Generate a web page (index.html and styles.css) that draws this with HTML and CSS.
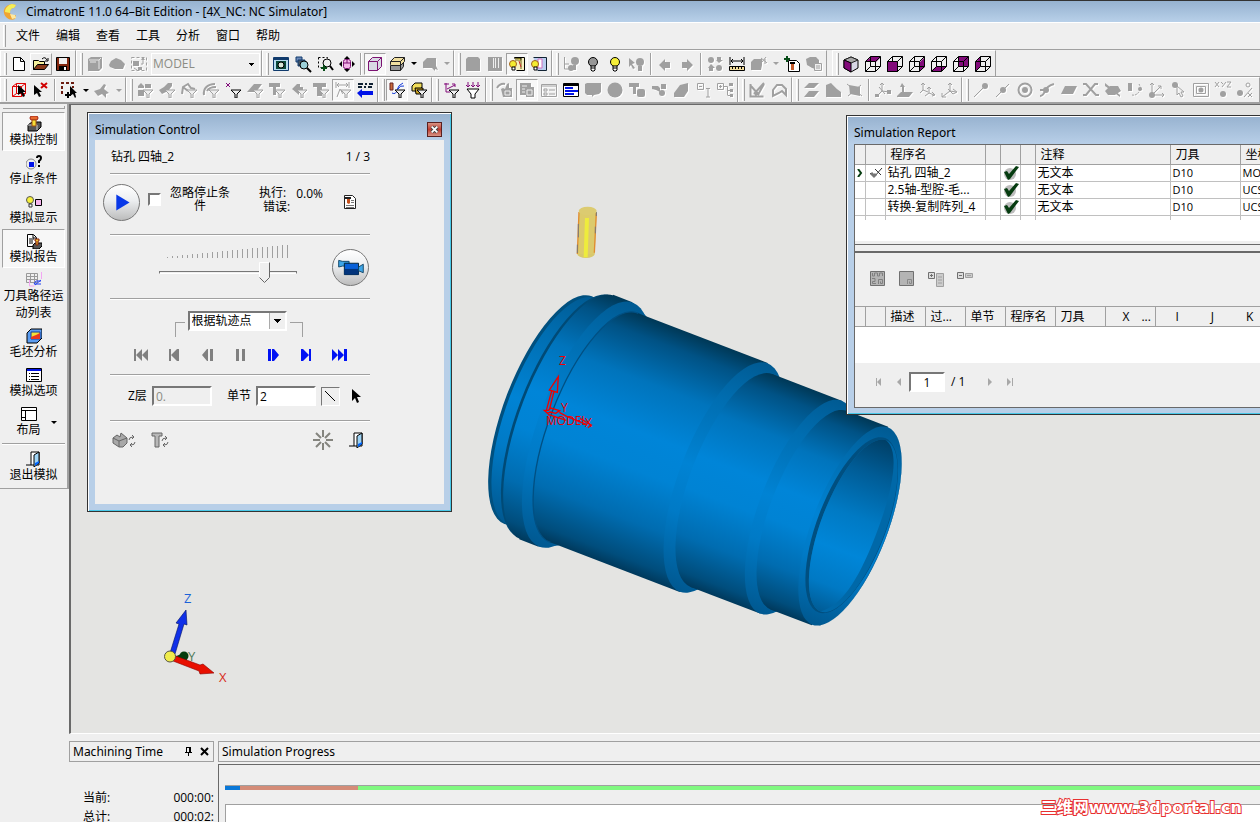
FILE: index.html
```html
<!DOCTYPE html>
<html lang="zh-CN">
<head>
<meta charset="utf-8">
<title>CimatronE 11.0 64–Bit Edition - [4X_NC: NC Simulator]</title>
<link rel="stylesheet" href="styles.css">
</head>
<body>
<svg class="sprite" aria-hidden="true">
  <symbol id="funnel" viewBox="0 0 16 16"><path d="M6 8h10l-4 4v4h-2v-4z" fill="#efefef" stroke="currentColor"/></symbol>
  <symbol id="cube" viewBox="0 0 16 16"><path d="M.5 5.500h10v10H.5zM5.500.5h10v10h-10zM.5 5.500l5-5M10.500 5.500l5-5M.5 15.500l5-5M10.500 15.500l5-5" fill="none" stroke="#000"/></symbol>
  <symbol id="check" viewBox="0 0 16 16"><circle cx="7" cy="9" r="6" fill="#bdbdbd"/><path d="M1 7l3-1 2 3 7-8 3 1-9 12-2 1z" fill="#063c10"/></symbol>
  <symbol id="bulb" viewBox="0 0 16 16"><circle cx="8" cy="6" r="4.500" stroke="#000"/><path d="M6 10h4v4l-1 1H7l-1-1z" fill="#fff" stroke="#000"/><path d="M6 12h4" stroke="#000"/></symbol>
  <symbol id="door" viewBox="0 0 16 16"><path d="M5 1h8v13H5zM0 14h5" fill="#fff" stroke="#000"/><path d="M8 4l5-3v11l-5 4z" fill="#9fd4f5" stroke="#000"/><path d="M9 12l4-2v2l-4 3z" fill="#06f"/></symbol>
  <symbol id="arrow" viewBox="0 0 16 16"><path d="M4 1v12l3-3 2 5 2-1-2-5h4z"/></symbol>
</svg>

<header class="titlebar">
  <svg class="logo" viewBox="0 0 16 16"><path d="M9 0C3 1 0 5 1 9c1 5 6 8 11 6l1-4c-3 1-6 0-6-3 0-2 1-4 4-4l2-3z" fill="#f0a432"/><path d="M9 0C5 1 2 4 2 8l5 1c0-3 1-5 4-5l2-3z" fill="#f4ee58"/><path d="M7 10l5 1 1 3-4 1z" fill="#ffe9a0"/></svg>
  <h1>CimatronE 11.0 64–Bit Edition - [4X_NC: NC Simulator]</h1>
</header>

<nav class="menubar">
  <span class="grip"></span>
  <button>文件</button><button>编辑</button><button>查看</button><button>工具</button><button>分析</button><button>窗口</button><button>帮助</button>
</nav>

<div class="toolrow">
  <div class="group"><span class="grip"></span>
    <button class="tb" aria-label="New"><svg viewBox="0 0 16 16"><path d="M2.500 1.500h7l4 4v9h-11zM9.500 1.500v4h4" fill="#fff" stroke="#000"/></svg></button>
    <button class="tb raised" aria-label="Open"><svg viewBox="0 0 16 16"><path d="M.5 13.500v-9h5l1 1h5v3" fill="#f6f19c" stroke="#000"/><path d="M.5 13.500l4-5h11l-4 5z" fill="#8a3a1a" stroke="#000"/><path d="M9 3q3-3 5 1M15 2v3h-3" fill="none" stroke="#000"/></svg></button>
    <button class="tb" aria-label="Save"><svg viewBox="0 0 16 16"><path d="M1.500 1.500h13v13h-13z" fill="#842810" stroke="#000"/><path d="M4 2h8v6H4z" fill="#efefef"/><path d="M4 10h8v4H4z"/><path d="M9 11h2v3H9z" fill="#fff"/></svg></button>
  </div>
  <div class="group"><span class="grip"></span>
    <button class="tb off" aria-label="Solid"><svg viewBox="0 0 16 16"><path d="M1 3l3-2h11v11l-3 3H1z"/><path d="M2 4h10v9M12 4l2-2M3 6h6" fill="none" stroke="#e8e8e8"/></svg></button>
    <button class="tb off" aria-label="Surface"><svg viewBox="0 0 16 16"><path d="M0 9l2-4 5-3 5 2 4 4-2 5H6L1 11z"/></svg></button>
    <button class="tb off" aria-label="Swap set"><svg viewBox="0 0 16 16"><path d="M.5 1.500h15v13H.5z" fill="none" stroke="currentColor" stroke-dasharray="3 2"/><path d="M2 5h6v5H2zM10 4h4l-2-3zM12 5v5M7 11h4v3H7z"/><path d="M12 4v4h-2M3 12l3 2" fill="none" stroke="currentColor"/></svg></button>
    <select class="combo" aria-label="Active model"><option>MODEL</option></select>
  </div>
  <div class="group"><span class="grip"></span>
    <button class="tb" aria-label="Zoom window"><svg viewBox="0 0 16 16"><path d="M.5 1.500h15v13H.5z" fill="#b7dcef" stroke="#103a6c"/><path d="M1 2h14v2H1z" fill="#103a6c"/><path d="M3 5h10v8H3z" fill="#0a4a3a"/><circle cx="8" cy="9" r="3" fill="#d8e8d8" stroke="#000"/></svg></button>
    <button class="tb" aria-label="Zoom previous"><svg viewBox="0 0 16 16"><path d="M1 1h6v5H1z" fill="#6b88b8" stroke="#103a6c"/><path d="M3 4h7v6H3z" fill="#456" stroke="#103a6c"/><circle cx="9" cy="9" r="4" fill="#9cd0d8" stroke="#000"/><path d="M12 12l4 4" stroke="#000" stroke-width="2"/></svg></button>
    <button class="tb" aria-label="Zoom in out"><svg viewBox="0 0 16 16"><path d="M1.500 1.500h9v10h-9z" fill="none" stroke="#000" stroke-dasharray="2 2"/><circle cx="10" cy="7" r="4" fill="#efefef" stroke="#000"/><path d="M13 10l3 4" stroke="#000" stroke-width="2"/><path d="M7 9v6M4 12h6" stroke="#084d18" stroke-width="2"/></svg></button>
    <button class="tb" aria-label="Pan"><svg viewBox="0 0 16 16"><path d="M8 0l3 3H5zM8 16l3-3H5zM0 8l3-3v6zM16 8l-3-3v6z"/><rect x="4.500" y="3.500" width="7" height="9" rx="2" fill="#f3b6e8" stroke="#7c1272"/><path d="M5 7h6M8 4v3" stroke="#7c1272"/></svg></button>
    <span class="sep"></span>
    <button class="tb pressed" aria-label="Shaded"><svg viewBox="0 0 16 16"><path d="M1.500 5.500l4-4h9v9l-4 4h-9z" fill="#d9d9e4" stroke="#7c1272"/><path d="M1.500 5.500h9v9M10.500 5.500l4-4" fill="none" stroke="#7c1272"/></svg></button>
    <button class="tb" aria-label="Display style"><svg viewBox="0 0 16 16"><path d="M1.500 5.500l4-4h10v4l-2 2v3l-3 4h-9v-4l1-1-1-1z" fill="#f0dfa0" stroke="#222"/><path d="M1.500 9.500h10l3-3v4l-3 4h-10z" fill="#999" stroke="#222"/><path d="M1.500 5.500h10v9M11.500 5.500l4-4" fill="none" stroke="#222"/></svg></button>
    <span class="drop"></span>
    <button class="tb off" aria-label="Select body"><svg viewBox="0 0 16 16"><path d="M1 6l4-4h9v8l2 4-3-1v2l-3-3H1z"/></svg></button>
    <span class="drop off"></span>
  </div>
  <div class="group"><span class="grip"></span>
    <button class="tb off" aria-label="Box"><svg viewBox="0 0 16 16"><path d="M1 3l2-2h10l2 2v12H1z"/></svg></button>
    <button class="tb off" aria-label="Grid"><svg viewBox="0 0 16 16"><path d="M1 1h14v14H1z"/><path d="M6.500 2v10M8.500 2v10M11.500 2v10" stroke="#efefef"/></svg></button>
    <button class="tb pressed" aria-label="Show tree"><svg viewBox="0 0 16 16"><path d="M5.500 1.500h10v13h-8" fill="#f7f0c0" stroke="#000"/><path d="M6 4h6v9" fill="none" stroke="#6a5a10"/><path d="M5 2h7v2" fill="#f1e23c" stroke="#000"/><circle cx="4" cy="8" r="3.500" fill="#f4ec30" stroke="#a06020"/><path d="M3 11h3v3H3z" fill="#fff" stroke="#000"/><path d="M10 5l2 6" stroke="#c9302c"/></svg></button>
    <button class="tb" aria-label="Show set"><svg viewBox="0 0 16 16"><path d="M2.500 1.500h13v13h-9" fill="#b9cdee" stroke="#123"/><path d="M7 3h4v9H7z" fill="#fff" stroke="#d070c0"/><circle cx="4" cy="8" r="3.500" fill="#f4ec30" stroke="#a06020"/><path d="M3 11h3v3H3z" fill="#fff" stroke="#000"/></svg></button>
  </div>
  <div class="group"><span class="grip"></span>
    <button class="tb off" aria-label="Feature tree"><svg viewBox="0 0 16 16"><path d="M1.500 1v12h4M2 8h4" fill="none" stroke="currentColor"/><circle cx="12" cy="5" r="4"/><circle cx="8" cy="12" r="3"/><path d="M10 9h3v5h-3z"/></svg></button>
    <button class="tb" aria-label="Hide"><svg viewBox="0 0 16 16"><use href="#bulb" fill="#979797"/></svg></button>
    <button class="tb" aria-label="Show"><svg viewBox="0 0 16 16"><use href="#bulb" fill="#f6f03a"/></svg></button>
    <button class="tb off" aria-label="Pick hidden"><svg viewBox="0 0 16 16"><path d="M0 2l6 5-3 1 3 4-2 1-2-4-2 2z"/><circle cx="11" cy="6" r="4"/><path d="M9 10h4v5H9z"/></svg></button>
    <span class="sep"></span>
    <button class="tb off" aria-label="Back"><svg viewBox="0 0 16 16"><path d="M2 9l6-6v3h5v6H8v3z"/></svg></button>
    <button class="tb off" aria-label="Forward"><svg viewBox="0 0 16 16"><path d="M14 9L8 3v3H3v6h5v3z"/></svg></button>
    <span class="sep"></span>
    <button class="tb off" aria-label="Replace"><svg viewBox="0 0 16 16"><circle cx="4" cy="4" r="3"/><path d="M10 1h4v3h2l-4 3-3-3h1zM2 15h4v-3h2L4 8l-3 4h1z"/><circle cx="12" cy="12" r="3"/></svg></button>
    <button class="tb" aria-label="Measure"><svg viewBox="0 0 16 16"><path d="M1 1v8M15 1v8M2 5h12M4 3L2 5l2 2M12 3l2 2-2 2" fill="none" stroke="#000"/><path d="M.5 10.500h15v4H.5z" fill="#f2dc9c" stroke="#000"/><path d="M3.500 11v2M6.500 11v2M9.500 11v2M12.500 11v2" stroke="#000"/></svg></button>
    <button class="tb off" aria-label="Explode"><svg viewBox="0 0 16 16"><path d="M0 6l3-3h8v6l-1 5H0z"/><path d="M11 6l4-5M10 2l6 5M14 3v5" stroke="currentColor"/></svg></button>
    <span class="drop off"></span>
    <button class="tb" aria-label="Tool report"><svg viewBox="0 0 16 16"><path d="M4.500 4.500h8l3 3v8h-11z" fill="#fff" stroke="#000"/><path d="M0 3h6M3 0v6" stroke="#084d18" stroke-width="2"/><path d="M6 6h5v2H6z"/><path d="M7 8h3v6H7z" fill="#c55a2a"/></svg></button>
    <button class="tb off" aria-label="List bodies"><svg viewBox="0 0 16 16"><path d="M0 3l4-2h6l3 3v5H9v4L6 12 1 9z"/><path d="M8.500 7.500h7v7h-7zM10 10h4M10 12h4" fill="#efefef" stroke="currentColor"/></svg></button>
  </div>
  <div class="group apart"><span class="grip"></span>
    <button class="tb" aria-label="Isometric view"><svg viewBox="0 0 16 16"><path d="M8 1l7 3v8l-7 4-7-4V4z" fill="#d8d8e6" stroke="#000"/><path d="M1 4l7 3 7-3-7-3z" fill="#a8a8a8" stroke="#222"/><path d="M1 4l7 3v9l-7-4z" fill="#820a7a" stroke="#000"/></svg></button>
    <button class="tb" aria-label="Top view"><svg viewBox="0 0 16 16"><path d="M0 6l6-5h10l-5 5z" fill="#820a7a"/><use href="#cube"/></svg></button>
    <button class="tb" aria-label="Front view"><svg viewBox="0 0 16 16"><use href="#cube"/><path d="M.5 5.500h10v10H.5z" fill="#820a7a" stroke="#000"/></svg></button>
    <button class="tb" aria-label="Right view"><svg viewBox="0 0 16 16"><path d="M11 6l5-5v10l-5 4z" fill="#820a7a"/><use href="#cube"/></svg></button>
    <button class="tb" aria-label="Bottom view"><svg viewBox="0 0 16 16"><path d="M0 15l6-5h10l-5 5z" fill="#820a7a"/><use href="#cube"/></svg></button>
    <button class="tb" aria-label="Back view"><svg viewBox="0 0 16 16"><path d="M5 1h10v10H5z" fill="#820a7a"/><use href="#cube"/></svg></button>
    <button class="tb" aria-label="Left view"><svg viewBox="0 0 16 16"><path d="M1 6l4-5v10l-4 4z" fill="#820a7a"/><use href="#cube"/></svg></button>
  </div>
</div>

<div class="toolrow last">
  <div class="group"><span class="grip"></span>
    <button class="tb" aria-label="Pick box"><svg viewBox="0 0 16 16"><path d="M1.500 4.500h9v10h-9zM5.500 1.500h9v10h-9zM1.500 4.500l4-3M10.500 4.500l4-3M1.500 14.500l4-3M10.500 14.500l4-3" fill="none" stroke="#e00000"/><path d="M7 3v10l3-2 2 4 2-1-2-4h3z"/></svg></button>
    <button class="tb" aria-label="Unpick"><svg viewBox="0 0 16 16"><path d="M1 3v10l3-2 2 4 2-1-2-4h3z"/><path d="M8 1l6 5M14 1L8 6" stroke="#d00000" stroke-width="2"/></svg></button>
    <span class="sep"></span>
    <button class="tb" aria-label="Select by box"><svg viewBox="0 0 16 16"><path d="M1 12V1h11v5" fill="none" stroke="#6c1c10" stroke-width="2" stroke-dasharray="3 2"/><path d="M9 4v10l3-2 2 4 1-1-1-4h2z"/><path d="M4 13h6M7 10v6" stroke="#000" stroke-width="2"/></svg></button>
    <span class="drop"></span>
    <button class="tb off" aria-label="Pick faces"><svg viewBox="0 0 16 16"><path d="M0 9l6-2 4-5 2 1-2 4 5 4-3 1v4l-4-4-4 2z"/></svg></button>
    <span class="drop off"></span>
  </div>
  <div class="group"><span class="grip"></span>
    <button class="tb off" aria-label="Filter all"><svg viewBox="0 0 16 16"><path d="M1 4l3-3 3 3v2H1zM8 2h6v4H8zM1 8h6v6H1z"/><use href="#funnel"/></svg></button>
    <button class="tb off" aria-label="Filter faces"><svg viewBox="0 0 16 16"><path d="M0 8l5-3 4-4h4v3l-4 5-6 3z"/><use href="#funnel"/></svg></button>
    <button class="tb off" aria-label="Filter edges"><svg viewBox="0 0 16 16"><path d="M1 12l1-7 5-3 3 4 4 1M2 5l5 4" fill="none" stroke="currentColor" stroke-width="2"/><use href="#funnel"/></svg></button>
    <button class="tb off" aria-label="Filter curves"><svg viewBox="0 0 16 16"><path d="M1 13C0 7 4 2 12 2M4 9q2-4 9-4" fill="none" stroke="currentColor" stroke-width="2"/><use href="#funnel"/></svg></button>
    <button class="tb" aria-label="Filter points"><svg viewBox="0 0 16 16"><path d="M1 1l4 4M5 1L1 5" stroke="#820a7a"/><use href="#funnel"/></svg></button>
    <button class="tb off" aria-label="Filter planes"><svg viewBox="0 0 16 16"><path d="M0 10l7-8h8l-6 8z"/><use href="#funnel"/></svg></button>
    <button class="tb off" aria-label="Filter tools"><svg viewBox="0 0 16 16"><path d="M0 1h11v4H7v8H4V5H0z"/><use href="#funnel"/></svg></button>
    <button class="tb off" aria-label="Filter arrows"><svg viewBox="0 0 16 16"><path d="M1 7l5-5h3v3h3v4H8v4z"/><use href="#funnel"/></svg></button>
    <button class="tb off" aria-label="Filter text"><svg viewBox="0 0 16 16"><path d="M0 1h13v4H9v9H4V5H0z"/><use href="#funnel"/></svg></button>
    <button class="tb off pressed" aria-label="Filter dimensions"><svg viewBox="0 0 16 16"><path d="M1 0v6M14 0v6M2 3h11M4 1L2 3l2 2M11 1l2 2-2 2M2 15l3-8 3 5" fill="none" stroke="currentColor"/><use href="#funnel"/></svg></button>
    <button class="tb" aria-label="Invert filter"><svg viewBox="0 0 16 16"><path d="M1 2h5M8 2h2M12 2h4M1 5h4M7 5h2M11 5h4" stroke="#123" stroke-width="2"/><path d="M0 11l5-4v2h11v4H5v3z" fill="#0012e8"/></svg></button>
  </div>
  <div class="group"><span class="grip"></span>
    <button class="tb pressed" aria-label="Motion filter"><svg viewBox="0 0 16 16"><path d="M1 1h3v7H1z" fill="#c96a38" stroke="#622"/><path d="M3 11q4 2 5-3T14 1M9 7q2-4 6-3" fill="none" stroke="#1238d8"/><use href="#funnel"/></svg></button>
    <button class="tb" aria-label="Part filter"><svg viewBox="0 0 16 16"><path d="M1 4l3-3h7v4l-3 4H1z" fill="#f0dc58" stroke="#000"/><path d="M4 6h8v6H5z" fill="#c8a020" stroke="#000"/><use href="#funnel"/></svg></button>
  </div>
  <div class="group"><span class="grip"></span>
    <button class="tb" aria-label="Path filter"><svg viewBox="0 0 16 16"><path d="M1 2h5M3 1v9h4M4 7l8-4M9 2h3v3" fill="none" stroke="#820a7a"/><use href="#funnel"/></svg></button>
    <button class="tb" aria-label="Axis filter"><svg viewBox="0 0 16 16"><path d="M3 0v4M8 0v4M13 0v4M1 3l2 2 2-2M6 3l2 2 2-2M11 3l2 2 2-2" fill="none" stroke="#820a7a"/><path d="M2 7h12l-4 5v4H6v-4z" fill="#fff" stroke="#000"/></svg></button>
  </div>
  <div class="group"><span class="grip"></span>
    <button class="tb off" aria-label="Simulate"><svg viewBox="0 0 16 16"><path d="M0 6q3-5 8-4" fill="none" stroke="currentColor" stroke-width="2"/><path d="M4 7l2-1 2 1 2-5 2-1v5h3v9H6z"/><path d="M8 9h5v4H8z" fill="none" stroke="#efefef"/></svg></button>
    <button class="tb off pressed" aria-label="Simulator"><svg viewBox="0 0 16 16"><path d="M1 1h11v4h3v10H7v-2H1z"/><path d="M3 4h5M3 7h3M3 10h3M8 8h5v5H8z" fill="none" stroke="#efefef"/></svg></button>
    <button class="tb off" aria-label="Form"><svg viewBox="0 0 16 16"><path d="M.5 2.500h15v12H.5zM1 4h14M3 7h3v2H3zM3 11h3v2H3zM8 8h6M8 12h6" fill="none" stroke="currentColor"/></svg></button>
    <button class="tb" aria-label="Procedure list"><svg viewBox="0 0 16 16"><path d="M.5 1.500h15v13H.5z" fill="#fff" stroke="#000"/><path d="M1 2h14v2H1z"/><path d="M2 6h8M2 9h13M2 12h9" stroke="#0012e8" stroke-width="2"/></svg></button>
    <button class="tb off" aria-label="Block"><svg viewBox="0 0 16 16"><path d="M0 2l2-1h14v9l-2 2-5 1-2 2v-2H2l-2-2z"/></svg></button>
    <button class="tb off" aria-label="Sphere"><svg viewBox="0 0 16 16"><circle cx="8" cy="8" r="7.500"/></svg></button>
    <button class="tb off" aria-label="Bolt"><svg viewBox="0 0 16 16"><path d="M0 1h10v4H7v7H4V5H0z"/><rect x="8" y="7" width="8" height="8" rx="2"/></svg></button>
    <button class="tb off" aria-label="Transform"><svg viewBox="0 0 16 16"><path d="M1 4h6l2 2v4L5 8 1 7zM10 2h5v5h-5z"/><circle cx="11" cy="11" r="3"/></svg></button>
    <button class="tb off" aria-label="Wedge"><svg viewBox="0 0 16 16"><path d="M1 11l6-8 8-2v8l-4 6H1z"/></svg></button>
    <button class="tb off" aria-label="Collapse"><svg viewBox="0 0 16 16"><path d="M2.500 1.500h6v6h-6zM4 4.500h3M11 6.500h4M13 7v8M11 15h4" fill="none" stroke="currentColor"/></svg></button>
    <button class="tb off" aria-label="Expand"><svg viewBox="0 0 16 16"><path d="M.5 1.500h6v6h-6zM2 4.500h3M3.500 3v3M7 4.500h3.500v9M11 8.500h2M11 13.500h2" fill="none" stroke="currentColor"/><path d="M12 1h4v3h-4zM13 7h3v3h-3zM13 12h3v3h-3z"/></svg></button>
  </div>
  <div class="group"><span class="grip"></span>
    <button class="tb off" aria-label="Sketch"><svg viewBox="0 0 16 16"><path d="M1.500 2v12.500h13M2 4l8 9M5 12L15 1M6 13l4-2 5-9" fill="none" stroke="currentColor" stroke-width="2"/></svg></button>
    <button class="tb off" aria-label="Composite"><svg viewBox="0 0 16 16"><path d="M2 14V8l4-5h5l4 4v6l-4-4-3 2z" fill="none" stroke="currentColor" stroke-width="2"/></svg></button>
  </div>
  <div class="group"><span class="grip"></span>
    <button class="tb off" aria-label="Planes"><svg viewBox="0 0 16 16"><path d="M1 6l5-5h10l-5 5zM1 15l5-6h10l-5 6z"/></svg></button>
    <button class="tb off" aria-label="Plane"><svg viewBox="0 0 16 16"><path d="M1 15V3l5-2 6 6 4 3v5z"/></svg></button>
    <button class="tb off" aria-label="Main planes"><svg viewBox="0 0 16 16"><path d="M2 3l11 2v9L3 12z"/><path d="M0 2l15 12M1 14L14 3" stroke="currentColor"/></svg></button>
    <span class="sep"></span>
    <button class="tb off" aria-label="UCS"><svg viewBox="0 0 16 16"><path d="M7 1v8M7 9l7 1M7 9l-5 5M5 3l2-2 2 2M4 5l6 7" fill="none" stroke="currentColor"/><path d="M0 12h4v3H0zM12 8h4v4h-4z"/></svg></button>
    <button class="tb off" aria-label="UCS on face"><svg viewBox="0 0 16 16"><path d="M0 14l4-4h12l-4 5H0zM5 1l3 4H7v6H5V5H3z"/></svg></button>
    <button class="tb off" aria-label="Move UCS"><svg viewBox="0 0 16 16"><path d="M4 1v7l5 2M4 8L1 11M2 3l2-2 2 2M10 5v6l5 2M10 11l-4 3M8 7l2-2 2 2M13 10l3 3-3 1" fill="none" stroke="currentColor"/></svg></button>
    <button class="tb off" aria-label="Activate UCS"><svg viewBox="0 0 16 16"><path d="M9 1v8l6 1M9 9l-8 6M7 3l2-2 2 2M1 11v4h4M12 7l4 3-4 2M7 7l5 5" fill="none" stroke="currentColor"/></svg></button>
  </div>
  <div class="group open"><span class="grip"></span>
    <button class="tb off" aria-label="End point"><svg viewBox="0 0 16 16"><path d="M1 15L12 4" stroke="currentColor"/><circle cx="12" cy="4" r="3"/></svg></button>
    <button class="tb off" aria-label="Mid point"><svg viewBox="0 0 16 16"><path d="M1 15L14 2" stroke="currentColor"/><circle cx="8" cy="8" r="3"/></svg></button>
    <button class="tb off" aria-label="Center"><svg viewBox="0 0 16 16"><circle cx="8" cy="8" r="6.500" fill="none" stroke="currentColor" stroke-width="2"/><circle cx="8" cy="8" r="3"/></svg></button>
    <button class="tb off" aria-label="On curve"><svg viewBox="0 0 16 16"><path d="M1 14q3 0 5-5t9-7M1 8h6" fill="none" stroke="currentColor" stroke-width="2"/><circle cx="7" cy="8" r="3"/></svg></button>
    <button class="tb off" aria-label="On face"><svg viewBox="0 0 16 16"><path d="M0 12l4-8h12l-4 8z"/></svg></button>
    <button class="tb off" aria-label="Intersection"><svg viewBox="0 0 16 16"><path d="M0 2h3l10 11h3M15 2h-3L3 13H0" fill="none" stroke="currentColor" stroke-width="2"/></svg></button>
    <button class="tb off" aria-label="Pierce"><svg viewBox="0 0 16 16"><path d="M0 9l5-5h8l3 5-6 4H3zM0 1l15 12v2L0 4z"/></svg></button>
    <button class="tb off" aria-label="Quadrant"><svg viewBox="0 0 16 16"><path d="M1 1h4v8H1z"/><path d="M5 13q5 1 8-5M12 2l3 6" fill="none" stroke="currentColor" stroke-dasharray="2 1"/><circle cx="13" cy="7" r="2"/></svg></button>
    <button class="tb off" aria-label="Origin"><svg viewBox="0 0 16 16"><path d="M3 1v12h12M3 13L12 4M1 3l2-2 2 2M13 11l2 2-2 2M9 4h3v3" fill="none" stroke="currentColor"/><circle cx="3" cy="13" r="3"/></svg></button>
    <button class="tb off" aria-label="Pick point"><svg viewBox="0 0 16 16"><circle cx="4" cy="3" r="3"/><path d="M6 4v9l2-2 2 4 2-1-2-4h3z" fill="none" stroke="currentColor"/></svg></button>
    <button class="tb off" aria-label="Screen"><svg viewBox="0 0 16 16"><path d="M.5 1.500h15v13H.5zM3.500 4.500h9v7h-9z" fill="none" stroke="currentColor"/><circle cx="8" cy="8" r="2.500"/></svg></button>
    <button class="tb off" aria-label="By coordinates"><svg viewBox="0 0 16 16"><path d="M0 0l4 5M4 0L0 5M6 0l2 2M11 0L7 5M12 0h4l-4 5h4" fill="none" stroke="currentColor"/><circle cx="8" cy="12" r="3"/></svg></button>
    <button class="tb off" aria-label="Delta"><svg viewBox="0 0 16 16"><circle cx="3" cy="11" r="3"/><circle cx="11" cy="3" r="2" fill="none" stroke="currentColor"/><path d="M7 15l8-9M11 11l4 4M15 11l-4 4" stroke="currentColor"/></svg></button>
  </div>
</div>

<div class="main">
  <aside class="sidebar">
    <div class="sidegroup">
      <span class="hgrip"></span>
      <button class="side on"><svg viewBox="0 0 16 16"><path d="M2 9l4-3h9v5l-4 4H2z" fill="#555" stroke="#000"/><path d="M2 9h9v5" fill="none" stroke="#ccc"/><rect x="4" y="0" width="8" height="4" rx="2" fill="#e86a30" stroke="#a02010"/><path d="M6 4h4v6H6z" fill="#f5df38" stroke="#a05010"/></svg><span>模拟控制</span></button>
      <button class="side"><svg viewBox="0 0 16 16"><circle cx="5" cy="9" r="5" fill="#eee" stroke="#888"/><path d="M3 7h5v5H3z" fill="#0012e8"/><path d="M11 3q0-2 2-2t2 2-2 3v2M13 10v2" fill="none" stroke="#000" stroke-width="2"/></svg><span>停止条件</span></button>
      <button class="side"><svg viewBox="0 0 16 16"><circle cx="4" cy="6" r="3.500" fill="#f6f03a" stroke="#555"/><path d="M3 10h3v3H3z" fill="#fff" stroke="#333"/><path d="M9.500 5.500h6v6h-6z" fill="#f5b4ee" stroke="#000"/></svg><span>模拟显示</span></button>
      <button class="side on"><svg viewBox="0 0 16 16"><path d="M1.500 1.500h6l3 3v9h-9zM7 2v3h3M3 6h5M3 8h4M3 10h4" fill="#fff" stroke="#000"/><path d="M7 12l2-2h7v3l-3 3H7z" fill="#555" stroke="#000"/><path d="M9 6h4v2h-1v4h-2V8H9z" fill="#f0c030" stroke="#802010"/></svg><span>模拟报告</span></button>
      <button class="side"><svg viewBox="0 0 16 16"><path d="M.5 1.500h11v9H.5zM0 4.500h11M4.500 1v9M8.500 1v9M0 7.500h11" fill="none" stroke="#999"/><path d="M3.500 8v6h5M15.500 0v7" fill="none" stroke="#f3a6f3"/><path d="M15 9h-5l-2 3h7M15 8l-6 5" fill="none" stroke="#2040f0"/></svg><span>刀具路径运动列表</span></button>
      <button class="side"><svg viewBox="0 0 16 16"><path d="M1 5l4-4h11v9l-5 5H1z" fill="#5a9cf0" stroke="#000"/><path d="M5 4h9v7H5z" fill="#f4e038" stroke="#103a9c"/><path d="M5 9l5-2 4-2v6H5z" fill="#e83820"/></svg><span>毛坯分析</span></button>
      <button class="side"><svg viewBox="0 0 16 16"><path d="M.5 1.500h15v13H.5z" fill="#fff" stroke="#000"/><path d="M1 2h14v2H1z" fill="#0012e8"/><path d="M3 6.500h1M3 9.500h1M3 12.500h1M5 6.500h8M5 9.500h8M5 12.500h8" stroke="#000"/></svg><span>模拟选项</span></button>
      <button class="side layout"><svg viewBox="0 0 16 16"><path d="M.5 1.500h15v13H.5zM1 4.500h14M4.500 5v9M5 11.500h-4" fill="#fff" stroke="#000"/></svg><span>布局</span><i class="caret"></i></button>
      <span class="hsep"></span>
      <button class="side"><svg viewBox="0 0 16 16"><use href="#door"/></svg><span>退出模拟</span></button>
    </div>
  </aside>

  <div class="workspace">
    <main class="viewport">
      <svg class="scene" viewBox="71 105 860 628" role="img" aria-label="Blue stepped cylinder part with cutting tool">
        <defs>
          <linearGradient id="body" x1="0" y1="0" x2="0" y2="1"><stop offset="0" stop-color="#003856"/><stop offset=".08" stop-color="#005285"/><stop offset=".25" stop-color="#0074bc"/><stop offset=".45" stop-color="#0085d8"/><stop offset=".6" stop-color="#0083d4"/><stop offset=".8" stop-color="#006cb0"/><stop offset=".95" stop-color="#004d7c"/><stop offset="1" stop-color="#00395c"/></linearGradient>
          <linearGradient id="rim" x1="0" y1="0" x2="0" y2="1"><stop offset="0" stop-color="#005a92"/><stop offset=".2" stop-color="#006db0"/><stop offset=".5" stop-color="#0083d4"/><stop offset=".7" stop-color="#007ac6"/><stop offset="1" stop-color="#005890"/></linearGradient>
          <linearGradient id="hole" x1="0" y1="0" x2="0" y2="1"><stop offset="0" stop-color="#003f66"/><stop offset=".2" stop-color="#005c96"/><stop offset=".45" stop-color="#007ac4"/><stop offset=".65" stop-color="#0086d8"/><stop offset=".85" stop-color="#0079c4"/><stop offset="1" stop-color="#005c96"/></linearGradient>
        </defs>
        <g transform="translate(480 200) scale(.33333)">
          <g transform="translate(1110 978) rotate(21)">
            <ellipse cx="-970" cy="0" rx="132" ry="366" fill="#00507f"/>
            <ellipse cx="-960" cy="0" rx="132" ry="364" fill="url(#rim)"/>
            <path d="M-960-365h45v730h-45z" fill="url(#body)"/>
            <ellipse cx="-918" cy="0" rx="139" ry="388" fill="#004a76"/>
            <ellipse cx="-910" cy="0" rx="139" ry="391" fill="url(#body)"/>
            <path d="M-912-393h62v786h-62z" fill="url(#body)"/>
            <ellipse cx="-848" cy="0" rx="141" ry="392" fill="url(#rim)"/>
            <path d="M-848-392L-795-368V368L-848 392z" fill="url(#rim)"/>
            <ellipse cx="-825" cy="0" rx="132" ry="368" fill="url(#body)" stroke="#005083" stroke-width="4"/>
            <path d="M-822-368h416v736h-416z" fill="url(#body)"/>
            <ellipse cx="-406" cy="0" rx="132" ry="367" fill="url(#rim)"/>
            <path d="M-406-367l46 25v684l-46 25z" fill="url(#rim)"/>
            <ellipse cx="-381" cy="0" rx="123" ry="342" fill="url(#body)"/>
            <path d="M-381-342h223v684h-223z" fill="url(#body)"/>
            <ellipse cx="-158" cy="0" rx="123" ry="342" fill="url(#rim)"/>
            <path d="M-158-342l44 23v638l-44 23z" fill="url(#rim)"/>
            <ellipse cx="-133" cy="0" rx="114" ry="319" fill="url(#body)"/>
            <path d="M-133-319H0v638h-133z" fill="url(#body)"/>
            <ellipse cx="0" cy="0" rx="113" ry="317" fill="url(#rim)"/>
            <path d="M0-317A113 317 0 0 1 0 317A106 300 0 0 0 0-317" fill="#00568a"/>
            <ellipse cx="4" cy="-4" rx="103" ry="280" fill="#004f80"/>
            <ellipse cx="9" cy="-4" rx="96" ry="275" fill="#0068a8"/>
            <path d="M-87-4A96 275 0 0 1 9-279C60-262 82-150 82 0S60 235 9 271A96 275 0 0 1-87-4" fill="url(#hole)"/>
          </g>
          <g>
            <ellipse cx="318" cy="162" rx="26" ry="12" fill="#d8c86c"/>
            <path d="M297 36l-5 126h52l6-126z" fill="#dcca6c"/>
            <path d="M297 36l-5 126M349 38l-6 120" stroke="#e08c30" stroke-width="4"/><path d="M295 72v40M292 134v25M349 36v12M346 80v20" stroke="#777" stroke-width="3"/>
            <path d="M315 54h12l-4 118h-12z" fill="#eeec3c"/><ellipse cx="323" cy="33" rx="27" ry="13" fill="#dccb70"/>
          </g>
          <g fill="none" stroke="#f00000" stroke-width="4">
            <path d="M235 530l-27 40 24 7zM215 573l-16 58M222 574l-14 56M193 631h12l8-7 26 8-12 8-16-4-8 4zM238 637l22 12 60 25M204 643l55 18M300 655l34 20-10 8"/>
          </g>
        </g>
        <g class="ucs"><text x="559" y="365">Z</text><text x="561" y="412">Y</text><text x="546" y="425">MODEL</text><text x="585" y="427">X</text></g>
        <g>
          <path d="M170 653l9-29-3-1 10-13 1 15-3-1-9 30z" fill="#1030e8" stroke="#001060" stroke-width=".6"/>
          <path d="M174 657l12-5v8z" fill="#043c0c"/><circle cx="184" cy="656" r="4.500" fill="#043c0c"/>
          <path d="M173 655l27 10 3-1 11 9-14 1-1-3-26-10z" fill="#e81000" stroke="#800" stroke-width=".6"/>
          <circle cx="170" cy="656.500" r="5.500" fill="#f0ec4c" stroke="#554" stroke-width="1"/>
          <g class="axis"><text x="184" y="603" fill="#1c62d8">Z</text><text x="188" y="661" fill="#4f7a58">Y</text><text x="219" y="682" fill="#d82c20">X</text></g>
        </g>
      </svg>

      <section class="window control">
        <div class="wintitle"><h2>Simulation Control</h2><button class="close" aria-label="Close"><svg viewBox="0 0 14 14"><path d="M4 4l6 6M10 4l-6 6" stroke="#444" stroke-width="4"/><path d="M4 4l6 6M10 4l-6 6" stroke="#fff" stroke-width="2"/></svg></button></div>
        <div class="panel">
          <div class="row head"><span>钻孔 四轴_2</span><span>1 / 3</span></div>
          <hr>
          <div class="row run">
            <button class="round" aria-label="Play"><svg viewBox="0 0 37 37"><path d="M13 10l14 8.500L13 27z" fill="#0838e8"/></svg></button>
            <label class="ignore"><input type="checkbox"><span>忽略停止条件</span></label>
            <div class="stats"><div>执行:</div><div>错误:</div></div>
            <span class="pct">0.0%</span>
            <button class="plain report" aria-label="Report"><svg viewBox="0 0 16 16"><path d="M2.500 1.500h8l3 3v10h-11z" fill="#fff" stroke="#222"/><path d="M3 3h6v2H3z" fill="#222"/><path d="M5 5h3v4l-1 1-2-1z" fill="#c5501c"/><path d="M9 6.500h3M9 8.500h3M4 11.500h8M4 13.500h8" stroke="#777"/></svg></button>
          </div>
          <hr>
          <div class="row speed">
            <div class="slider">
              <svg class="ticks" viewBox="0 0 124 14"><path d="M1.500 14v-1M6.500 14v-2M11.500 14v-2M16.500 14v-3M21.500 14v-3M26.500 14v-4M31.500 14v-4M36.500 14v-5M41.500 14v-5M46.500 14v-6M51.500 14v-6M56.500 14v-7M61.500 14v-7M66.500 14v-8M71.500 14v-8M76.500 14v-9M81.500 14v-9M86.500 14v-10M91.500 14v-10M96.500 14v-11M101.500 14v-11M106.500 14v-12M111.500 14v-12M116.500 14v-13M121.500 14v-13" stroke="#a0a0a0"/></svg>
              <input type="range" min="0" max="100" value="79" aria-label="Simulation speed">
            </div>
            <button class="round" aria-label="Record"><svg viewBox="0 0 37 37"><path d="M6 11l4 1h7v5h-7l-4 1z" fill="#3ea6e8" stroke="#146"/><path d="M12 14h15v12H12z" fill="#0860d8" stroke="#023"/><path d="M12 20h15v6H12z" fill="#02347c"/><path d="M27 18l5-3v9l-5-2z" fill="#3ea6e8" stroke="#146"/></svg></button>
          </div>
          <hr>
          <div class="mode"><i class="brk left"></i><select aria-label="Step mode"><option>根据轨迹点</option></select><i class="brk right"></i></div>
          <div class="transport">
            <button class="plain" aria-label="First"><svg viewBox="0 0 15 12"><path d="M0 0h2v12H0zM8 0v12L2 6zM14 0v12L8 6z"/></svg></button>
            <button class="plain" aria-label="Previous step"><svg viewBox="0 0 15 12"><path d="M2 0h2v12H2zM12 0v12H10L4 6l6-6z"/></svg></button>
            <button class="plain" aria-label="Step back"><svg viewBox="0 0 15 12"><path d="M8 0v12H7L2 6l5-6zM10 0h3v12h-3z"/></svg></button>
            <button class="plain" aria-label="Pause"><svg viewBox="0 0 15 12"><path d="M3 0h3v12H3zM9 0h3v12H9z"/></svg></button>
            <button class="plain live" aria-label="Step"><svg viewBox="0 0 15 12"><path d="M2 0h3v12H2zM6 0h2l5 6-5 6H6z"/></svg></button>
            <button class="plain live" aria-label="Next step"><svg viewBox="0 0 15 12"><path d="M2 0h2l6 6-6 6H2zM10 0h2v12h-2z"/></svg></button>
            <button class="plain live" aria-label="Last"><svg viewBox="0 0 15 12"><path d="M0 0l6 6-6 6zM6 0l6 6-6 6zM12 0h3v12h-3z"/></svg></button>
          </div>
          <hr>
          <div class="row fields">
            <label for="zl">Z层</label><input id="zl" class="box" type="text" value="0." disabled>
            <label for="blk" class="blk">单节</label><input id="blk" class="box" type="text" value="2">
            <button class="linebtn" aria-label="Line"><svg viewBox="0 0 16 16"><path d="M3 3l10 10" stroke="#000"/></svg></button>
            <button class="plain pick" aria-label="Pick"><svg viewBox="0 0 16 16"><use href="#arrow"/></svg></button>
          </div>
          <hr>
          <div class="row foot">
            <button class="plain wide" aria-label="Update part"><svg viewBox="0 0 24 16"><path d="M1 6l4-3 3 2 1-4 6 5v5l-4 4H7L1 11z" fill="#a8a8a8" stroke="#666"/><path d="M1 6l6 3v6M7 9l8-3" fill="none" stroke="#666"/><path d="M17 8q0-3 4-3M20 3l2 2-2 2M23 10q0 3-4 3M20 11l-2 2 2 2" fill="none" stroke="#666"/></svg></button>
            <button class="plain mid" aria-label="Update tool"><svg viewBox="0 0 18 16"><path d="M1 1h10v3H8v11H4V4H1z" fill="#b8b8b8" stroke="#666"/><path d="M11 9q0-3 4-3M14 4l2 2-2 2M17 10q0 3-4 3M14 11l-2 2 2 2" fill="none" stroke="#666"/></svg></button>
            <button class="plain star" aria-label="Reset"><svg viewBox="0 0 20 20"><path d="M10 0v7M10 13v7M0 10h7M13 10h7M3 3l5 5M12 12l5 5M17 3l-5 5M8 12l-5 5" stroke="#85857f" stroke-width="2"/></svg></button>
            <button class="plain exit" aria-label="Exit"><svg viewBox="0 0 16 16"><use href="#door"/></svg></button>
          </div>
        </div>
      </section>

      <section class="window reportwin">
        <div class="wintitle"><h2>Simulation Report</h2></div>
        <div class="sheet">
          <div class="upper">
            <table class="grid">
              <colgroup><col class="w10"><col class="w20"><col class="w100"><col class="w15"><col class="w20"><col class="w15"><col class="w135"><col class="w70"><col class="w70"></colgroup>
              <thead><tr><th></th><th></th><th>程序名</th><th></th><th></th><th></th><th>注释</th><th>刀具</th><th>坐标系</th></tr></thead>
              <tbody>
                <tr><td><svg class="mark" viewBox="0 0 6 8"><path d="M1 0l3 4-3 4" fill="none" stroke="#063c10" stroke-width="2"/></svg></td><td><svg class="tick" viewBox="0 0 14 12"><path d="M1 6l4 4 8-9M6 2l6 6" fill="none" stroke="#333" stroke-width="1"/><path d="M2 6l3 3 2-2" fill="none" stroke="#777" stroke-width="3"/></svg></td><td>钻孔 四轴_2</td><td></td><td><svg class="ok"><use href="#check"/></svg></td><td></td><td>无文本</td><td class="t">D10</td><td class="t">MODEL</td></tr>
                <tr><td></td><td></td><td>2.5轴-型腔-毛...</td><td></td><td><svg class="ok"><use href="#check"/></svg></td><td></td><td>无文本</td><td class="t">D10</td><td class="t">UCS1</td></tr>
                <tr><td></td><td></td><td>转换-复制阵列_4</td><td></td><td><svg class="ok"><use href="#check"/></svg></td><td></td><td>无文本</td><td class="t">D10</td><td class="t">UCS1</td></tr>
                <tr class="stub"><td></td><td></td><td></td><td></td><td></td><td></td><td></td><td></td><td></td></tr>
              </tbody>
            </table>
          </div>
          <div class="splitter"></div>
          <div class="tools">
            <button class="plain" aria-label="All motions"><svg viewBox="0 0 16 16"><path d="M.5.5h14v14H.5z" fill="#b4b4b4" stroke="#707070"/><path d="M2.500 2v3h2V2h3v3h2V2h3v3M2 7.500h3v3H2.500v2H6M8.500 13V8.500h4v4h-2v-2" fill="none" stroke="#808080"/></svg></button>
            <button class="plain" aria-label="Single motion"><svg viewBox="0 0 16 16"><path d="M.5.5h14v14H.5z" fill="#b4b4b4" stroke="#707070"/><path d="M8.500 13V8.500h4v4h-2v-2" fill="none" stroke="#888"/></svg></button>
            <button class="plain" aria-label="Expand list"><svg viewBox="0 0 16 16"><path d="M.5 1.500h6v6h-6zM2 4.500h3M3.500 3v3" fill="#ddd" stroke="#707070"/><path d="M8.500 2.500h7v13h-7zM10 6h4M10 9h4M10 12h4" fill="#ccc" stroke="#a0a0a0"/></svg></button>
            <button class="plain" aria-label="Collapse list"><svg viewBox="0 0 16 16"><path d="M.5 1.500h6v6h-6zM2 4.500h3" fill="#ddd" stroke="#707070"/><path d="M8.500 2.500h7v4h-7zM10 4.500h4" fill="#ccc" stroke="#a0a0a0"/></svg></button>
          </div>
          <div class="lower">
            <table class="grid">
              <colgroup><col class="w10"><col class="w20"><col class="w40"><col class="w40"><col class="w40"><col class="w50"><col class="w50"><col class="w50"><col class="w140"></colgroup>
              <thead><tr><th></th><th></th><th>描述</th><th>过...</th><th>单节</th><th>程序名</th><th>刀具</th><th class="x"><div><span>X</span><span>...</span></div></th><th class="ijk"><div><span>I</span><span>J</span><span>K</span></div></th></tr></thead>
            </table>
          </div>
          <div class="pager">
            <button class="plain" aria-label="First page"><svg viewBox="0 0 8 8"><path d="M1 0h1v8H1zM6 0v8L2 4z"/></svg></button>
            <button class="plain" aria-label="Previous page"><svg viewBox="0 0 8 8"><path d="M6 0v8L2 4z"/></svg></button>
            <input class="box" type="text" value="1" aria-label="Page"><span>/ 1</span>
            <button class="plain next" aria-label="Next page"><svg viewBox="0 0 8 8"><path d="M2 0v8l4-4z"/></svg></button>
            <button class="plain" aria-label="Last page"><svg viewBox="0 0 8 8"><path d="M1 0v8l4-4zM6 0h1v8H6z"/></svg></button>
          </div>
        </div>
      </section>
    </main>

    <footer class="dock">
      <section class="time">
        <div class="dockhead"><h2>Machining Time</h2><button class="plain" aria-label="Pin"><svg viewBox="0 0 9 9"><path d="M2 0h5v5h1v1H5v3H4V6H1V5h1zM3 1v4h2V1z"/></svg></button><button class="plain" aria-label="Close"><svg viewBox="0 0 9 9"><path d="M1 1l7 7M8 1L1 8" stroke="#000" stroke-width="2"/></svg></button></div>
        <dl><dt>当前:</dt><dd>000:00:</dd><dt>总计:</dt><dd>000:02:</dd></dl>
      </section>
      <section class="progress">
        <div class="dockhead"><h2>Simulation Progress</h2></div>
        <div class="progbody">
          <div class="bar"><i class="done"></i><i class="next"></i><i class="rest"></i></div>
          <div class="log"></div>
        </div>
      </section>
      <div class="mark3d">三维网www.3dportal.cn</div>
    </footer>
  </div>
</div>
</body>
</html>
```
FILE: styles.css
```css
* { box-sizing: border-box; }
body {
  margin: 0;
  height: 100vh;
  display: flex;
  flex-direction: column;
  overflow: hidden;
  background: #efefef;
  color: #000;
  font: 12px/16px "Open Sans", "Noto Sans CJK SC", sans-serif;
}
h1, h2 { margin: 0; font: 12px/16px "Noto Sans", sans-serif; white-space: nowrap; }
button, input, select { font: inherit; color: inherit; margin: 0; }
button { border: 0; padding: 0; background: none; }
svg { display: block; }
.sprite { position: absolute; width: 0; height: 0; }

.titlebar {
  flex: none;
  display: flex;
  align-items: center;
  gap: 7px;
  height: 22px;
  padding-left: 3px;
  border-top: 1px solid #333;
  background: linear-gradient(#96b2d0, #b8d0e9);
}
.logo { width: 16px; height: 16px; }

.menubar {
  flex: none;
  display: flex;
  align-items: center;
  height: 28px;
  border-top: 1px solid #fff;
  border-bottom: 1px solid #a0a0a0;
}
.menubar button { padding: 0 8px; }
.grip {
  flex: none;
  align-self: center;
  width: 3px;
  height: 22px;
  margin: 0 1px 0 3px;
  border-right: 1px solid #a0a0a0;
  border-left: 1px solid #fff;
}
.menubar .grip { margin-right: 2px; }

.toolrow { flex: none; display: flex; height: 27px; border-bottom: 1px solid #a0a0a0; }
.toolrow.last { border-bottom-width: 2px; }
.group {
  flex: none;
  display: flex;
  align-items: center;
  border-left: 1px solid #fff;
  border-top: 1px solid #fff;
  border-right: 1px solid #a0a0a0;
  padding-right: 1px;
}
.group.apart { margin-left: 5px; }
.group.open { flex: 1 0 auto; }
.tb {
  width: 22px;
  height: 22px;
  display: flex;
  align-items: center;
  justify-content: center;
  border: 1px solid transparent;
  color: #000;
}
.tb svg { flex: none; width: 16px; height: 16px; fill: currentColor; overflow: visible; }
.off { color: #a0a0a0; }
.tb.off svg { filter: drop-shadow(1px 1px 0 #fff); }
.raised { border-color: #fff #a0a0a0 #a0a0a0 #fff; }
.pressed, .side.on { border-color: #a0a0a0 #fff #fff #a0a0a0; background: #f7f7f7; }
.sep {
  width: 2px;
  height: 22px;
  margin: 0 2px;
  border-left: 1px solid #a0a0a0;
  border-right: 1px solid #fff;
}
.drop { width: 11px; display: flex; justify-content: center; }
.drop::before, .caret::before {
  content: "";
  display: block;
  border: 3px solid transparent;
  border-top-color: currentColor;
  border-bottom: 0;
}
.combo {
  appearance: none;
  width: 109px;
  height: 22px;
  margin-left: 1px;
  padding: 0 1px;
  border: 1px solid #fff;
  border-radius: 0;
  color: #8c8c84;
  background: linear-gradient(#000, #000) 97px 9px / 5px 1px no-repeat, linear-gradient(#000, #000) 98px 10px / 3px 1px no-repeat, linear-gradient(#000, #000) 99px 11px / 1px 1px no-repeat, #efefef;
}

.main { flex: 1; display: flex; min-height: 0; }
.sidebar { flex: none; width: 69px; }
.sidegroup {
  display: flex;
  flex-direction: column;
  padding: 8px 2px 2px;
  border-right: 2px solid #a0a0a0;
  border-bottom: 1px solid #a0a0a0;
  position: relative;
}
.hgrip {
  position: absolute;
  top: 2px;
  left: 3px;
  right: 2px;
  height: 3px;
  border: 1px solid #a0a0a0;
  border-width: 0 1px 1px 0;
}
.side {
  display: flex;
  flex-direction: column;
  align-items: center;
  padding: 3px 0 2px;
  border: 1px solid transparent;
  line-height: 17px;
  position: relative;
}
.side span { margin-top: -1px; }
.side svg { width: 16px; height: 16px; }
.layout { padding-right: 10px; }
.caret { position: absolute; right: 7px; top: 18px; }
.hsep { height: 2px; margin: 2px 0; border-top: 1px solid #a0a0a0; border-bottom: 1px solid #fff; }

.workspace { flex: 1; display: flex; flex-direction: column; min-width: 0; }
.viewport {
  flex: 1;
  position: relative;
  overflow: hidden;
  background: #e4e4e2;
  border: 1px solid #696969;
  border-width: 1px 0 0 2px;
  border-bottom: 1px solid #fff;
}
.scene { width: 860px; height: 628px; }
.axis { font: 13px "Open Sans", sans-serif; }
.ucs { font: 12px "Open Sans", sans-serif; fill: #f00000; }

.window {
  position: absolute;
  border: 1px solid #333;
  background: #b8cfe8;
  box-shadow: inset 1px 1px 0 #fff, inset -1px -1px 0 #48c8e8;
}
.wintitle {
  flex: none;
  display: flex;
  align-items: center;
  justify-content: space-between;
  height: 27px;
  margin: 1px 1px 0;
  padding: 5px 8px 0 6px;
  background: linear-gradient(#98b3d0, #b8cfe8);
}
.close {
  width: 15px;
  height: 15px;
  border: 1px solid #5a2020;
  background: linear-gradient(#d89484, #c03c30 50%, #d89484);
}
.close svg { width: 13px; height: 13px; }
.control { left: 16px; top: 7px; width: 365px; height: 400px; display: flex; flex-direction: column; }
.control .wintitle { height: 26px; }
.panel { flex: 1; margin: 0 7px 7px; padding: 0 74px 0 8px; background: #efefef; }
hr { height: 2px; margin: 0 0 0 7px; border: 0; border-top: 1px solid #a0a0a0; border-bottom: 1px solid #fff; }
.row { display: flex; align-items: center; }
.head { height: 33px; justify-content: space-between; padding-left: 8px; }
.run { height: 59px; padding-bottom: 5px; }
.round {
  flex: none;
  width: 37px;
  height: 37px;
  border: 1px solid #777;
  border-radius: 50%;
  background: linear-gradient(#fff, #eceef0 45%, #bcbcbc);
}
.round svg { width: 35px; height: 35px; }
.ignore { display: flex; align-items: center; margin-left: 8px; }
.ignore input {
  appearance: none;
  width: 13px;
  height: 13px;
  margin: 0 6px 6px 0;
  border: 2px solid #777;
  border-color: #777 #fff #fff #777;
  background: #fff;
}
.ignore span { width: 66px; text-align: center; line-height: 13px; margin-bottom: 6px; }
.stats { margin: 0 6px 4px 26px; line-height: 14px; }
.stats div + div { padding-left: 4px; }
.pct { width: 46px; margin-bottom: 16px; }
.plain { flex: none; width: 16px; }
.plain svg { width: 16px; height: 16px; }
.speed { height: 62px; padding: 0 1px 0 56px; justify-content: space-between; }
.slider { align-self: flex-start; width: 138px; display: flex; flex-direction: column; align-items: center; padding-top: 8px; }
.ticks { width: 124px; height: 14px; }
.slider input { appearance: none; width: 138px; height: 22px; margin: 3px 0 0; background: none; }
.slider input::-webkit-slider-runnable-track { height: 3px; border: 1px solid #777; border-bottom-color: #fff; }
.slider input::-webkit-slider-thumb {
  appearance: none;
  width: 11px;
  height: 21px;
  margin-top: -10px;
  background: url("data:image/svg+xml,%3Csvg xmlns='http://www.w3.org/2000/svg' viewBox='0 0 11 21'%3E%3Cpath d='M.5 .5h10v15l-5 5-5-5z' fill='%23efefef' stroke='%23fff'/%3E%3Cpath d='M10.5 .5v15l-5 5-5-5' fill='none' stroke='%23666'/%3E%3C/svg%3E");
}
.mode { display: flex; justify-content: center; gap: 3px; padding-top: 11px; margin-left: 4px; }
.mode select {
  appearance: none;
  width: 99px;
  height: 20px;
  padding: 0 2px;
  border: 2px solid #777;
  border-color: #777 #fff #fff #777;
  border-radius: 0;
  background:
    linear-gradient(#000, #000) 84px 6px / 7px 1px no-repeat,
    linear-gradient(#000, #000) 85px 7px / 5px 1px no-repeat,
    linear-gradient(#000, #000) 86px 8px / 3px 1px no-repeat,
    linear-gradient(#000, #000) 87px 9px / 1px 1px no-repeat,
    linear-gradient(90deg, #aaa 1px, #efefef 1px) right / 16px 16px no-repeat,
    #fff;
}
.brk { width: 10px; height: 15px; margin-top: 11px; border: 1px solid #a0a0a0; border-bottom: 0; }
.brk.left { border-right: 0; }
.brk.right { border-left: 0; width: 13px; }
.transport { display: flex; gap: 18px; padding: 12px 0 13px 31px; color: #808080; }
.transport .plain { width: 15px; }
.transport svg { width: 15px; height: 12px; fill: currentColor; }
.transport .live { color: #0012f4; }
.fields { height: 44px; padding: 0 0 4px 25px; }
.box {
  width: 60px;
  height: 20px;
  padding: 0 2px;
  border: 2px solid #777;
  border-color: #777 #fff #fff #777;
  background: #fff;
}
.fields .box { margin-left: 5px; }
.box:disabled { background: #efefef; color: #8c8c84; }
.blk { margin-left: 15px; }
.linebtn { width: 19px; height: 19px; margin-left: 5px; border: 1px solid #777; border-color: #777 #fff #fff #777; }
.linebtn svg { width: 16px; height: 16px; }
.pick { margin-left: 8px; }
.foot { height: 36px; padding-left: 9px; }
.foot .wide, .foot .wide svg { width: 24px; }
.foot .mid { width: 18px; margin: 0 144px 0 15px; }
.foot .mid svg { width: 18px; }
.foot .star, .foot .star svg { width: 20px; height: 20px; }
.foot .exit { margin-left: 16px; }

.reportwin { left: 775px; right: -40px; top: 10px; height: 300px; display: flex; flex-direction: column; }
.sheet { flex: 1; display: flex; flex-direction: column; margin: 0 7px 6px; border: 1px solid #696969; background: #efefef; }
.upper { height: 96px; background: #fff; }
.grid { table-layout: fixed; width: 455px; border-collapse: collapse; }
.w10 { width: 10px; } .w15 { width: 15px; } .w20 { width: 20px; } .w40 { width: 40px; } .w50 { width: 50px; }
.w70 { width: 70px; } .w100 { width: 100px; } .w135 { width: 135px; } .w140 { width: 140px; }
.grid th {
  height: 19px;
  padding: 1px 0 0 5px;
  text-align: left;
  font-weight: normal;
  line-height: 16px;
  white-space: nowrap;
  overflow: hidden;
  background: #efefef;
  border-right: 1px solid #a0a0a0;
  border-bottom: 1px solid #a0a0a0;
}
.grid td {
  height: 17px;
  padding: 0 0 0 2px;
  line-height: 16px;
  white-space: nowrap;
  overflow: hidden;
  border-right: 1px solid #c0c0c0;
  border-bottom: 1px solid #c0c0c0;
}
.grid .t { font-size: 11px; }
.grid .stub td { height: 5px; border-bottom: 0; }
.mark { width: 6px; height: 8px; }
.tick { width: 14px; height: 12px; margin-left: 1px; }
.ok { width: 16px; height: 16px; }
.splitter { height: 9px; margin-top: 3px; border: 1px solid #696969; border-width: 1px 0 2px; }
.tools { display: flex; align-items: flex-start; gap: 13px; padding: 18px 0 0 15px; height: 53px; }
.lower { height: 57px; background: #fff; border-top: 1px solid #a0a0a0; }
.lower .grid { width: 440px; }
.x div { display: flex; gap: 12px; padding-left: 12px; }
.ijk div { display: flex; gap: 32px; padding-left: 15px; }
.pager { display: flex; align-items: center; padding: 9px 0 0 20px; }
.pager .plain { width: 8px; margin-right: 12px; color: #a8a8a8; }
.pager svg { width: 8px; height: 8px; fill: currentColor; }
.pager .plain + .box { width: 36px; margin: 0 6px 0 -6px; text-align: center; }
.pager .next { margin-left: 21px; }

.dock { flex: none; position: relative; display: flex; gap: 4px; height: 88px; padding-top: 7px; overflow: hidden; }
.time { width: 145px; }
.progress { flex: 1; display: flex; flex-direction: column; }
.dockhead { flex: none; display: flex; align-items: center; height: 21px; padding: 0 4px 0 3px; border: 1px solid #a0a0a0; }
.progress .dockhead, .progbody { border-right: 0; }
.dockhead h2 { flex: 1; }
.dockhead .plain { width: 9px; margin-left: 7px; }
.dockhead svg { width: 9px; height: 9px; }
.time dl { display: grid; grid-template-columns: 1fr auto; row-gap: 2px; margin: 27px 0 0 14px; line-height: 17px; }
.time dd { margin: 0; }
.progbody { flex: none; margin-top: 2px; padding: 20px 0 0 6px; border: 1px solid #696969; border-width: 1px 0 0 1px; }
.bar { display: flex; height: 5px; border-top: 1px solid #a0a0a0; }
.done { width: 15px; background: #0a78d8; }
.progress .next { width: 118px; background: #d48c78; }
.rest { flex: 1; background: #80f880; }
.log { height: 40px; margin-top: 14px; border: 1px solid #a0a0a0; border-right: 0; background: #fff; }
.mark3d {
  position: absolute;
  right: 18px;
  bottom: 4px;
  font: bold 16px/20px "DejaVu Sans", "Noto Sans CJK SC", sans-serif;
  color: #fff;
  -webkit-text-stroke: 2px #e83030;
  paint-order: stroke fill;
}
```
